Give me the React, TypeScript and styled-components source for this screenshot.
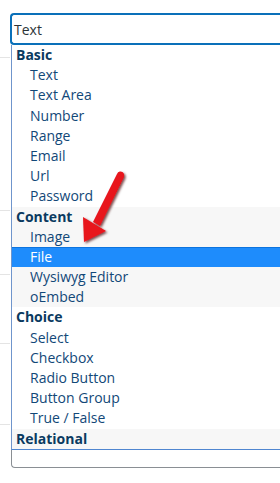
import React from "react";
import styled, { createGlobalStyle } from "styled-components";

const GlobalStyle = createGlobalStyle`
  body {
    margin: 0;
    background: #ffffff;
    font-family: "Open Sans", "Noto Sans", "Liberation Sans", sans-serif;
  }
`;

const Page = styled.div`
  position: relative;
  width: 280px;
  height: 483px;
  overflow: hidden;
  display: flex;
  flex-direction: row;
`;

const Gutter = styled.div`
  width: 10px;
  flex-shrink: 0;
  display: flex;
  flex-direction: column;
`;

const GutterRow = styled.div<{ $h: number }>`
  height: ${p => p.$h}px;
  flex-shrink: 0;
  border-bottom: 1px solid #e4e4e4;
`;

const Select = styled.div`
  flex: 1;
  margin-top: 13px;
  display: flex;
  flex-direction: column;
  min-width: 0;
`;

const SearchBox = styled.div`
  height: 28px;
  border: 2px solid #0a70b9;
  border-right: none;
  border-radius: 4px 0 0 4px;
  padding-left: 2px;
  display: flex;
  align-items: center;
  font-size: 14px;
  color: #2c3338;
  margin-right: -4px;
`;

const Dropdown = styled.div`
  margin-left: 1px;
  height: 422px;
  border-left: 1px solid #8a8f94;
  border-bottom: 1px solid #8a8f94;
  border-radius: 0 0 0 4px;
  display: flex;
  flex-direction: column;
`;

const List = styled.div`
  border-left: 1px solid #6f95cc;
  margin-left: -1px;
  border-bottom: 1px solid #4f86d0;
  display: flex;
  flex-direction: column;
`;

const Group = styled.div<{ $shade: boolean }>`
  background: ${p => (p.$shade ? "#f7f7f7" : "#ffffff")};
  display: flex;
  flex-direction: column;
`;

const GroupLabel = styled.div`
  height: 20.2px;
  line-height: 20.2px;
  padding-left: 4px;
  font-size: 14px;
  font-weight: 700;
  color: #0a3a60;
`;

const Option = styled.div<{ $active?: boolean }>`
  height: 20.2px;
  line-height: 20.2px;
  padding-left: 18px;
  font-size: 14px;
  color: ${p => (p.$active ? "#ffffff" : "#124878")};
  background: ${p => (p.$active ? "#1e8cfc" : "transparent")};
  box-shadow: ${p => (p.$active ? "inset 0 1px 0 #0d74de" : "none")};
`;

const Arrow = styled.svg`
  position: absolute;
  left: 76px;
  top: 166px;
`;

const groups = [
  { label: "Basic", items: ["Text", "Text Area", "Number", "Range", "Email", "Url", "Password"] },
  { label: "Content", items: ["Image", "File", "Wysiwyg Editor", "oEmbed"] },
  { label: "Choice", items: ["Select", "Checkbox", "Radio Button", "Button Group", "True / False"] },
  { label: "Relational", items: [] as string[] },
];

const gutterRows = [57, 152, 63, 68, 80];

const App = () => {
  return (
    <Page>
      <GlobalStyle />
      <Gutter>
        {gutterRows.map((h, i) => (
          <GutterRow key={i} $h={h} />
        ))}
      </Gutter>
      <Select>
        <SearchBox>Text</SearchBox>
        <Dropdown>
          <List>
            {groups.map((g, i) => (
              <Group key={g.label} $shade={i % 2 === 1}>
                <GroupLabel>{g.label}</GroupLabel>
                {g.items.map(item => (
                  <Option key={item} $active={item === "File"}>
                    {item}
                  </Option>
                ))}
              </Group>
            ))}
          </List>
        </Dropdown>
      </Select>
      <Arrow width="60" height="84" viewBox="76 166 60 84">
        <defs>
          <filter id="sh" x="-30%" y="-30%" width="160%" height="160%">
            <feDropShadow dx="1.5" dy="1.5" stdDeviation="1.2" floodColor="#400" floodOpacity="0.7" />
          </filter>
        </defs>
        <g filter="url(#sh)">
          <path
            d="M120.5 171.5 Q125 172 124 177 L100 226 L93 222 L117 174 Q118 171 120.5 171.5 Z"
            fill="#e8141b"
          />
          <path d="M84 242 L83 217 L106 231 Z" fill="#e8141b" />
        </g>
      </Arrow>
    </Page>
  );
};

export default App;
